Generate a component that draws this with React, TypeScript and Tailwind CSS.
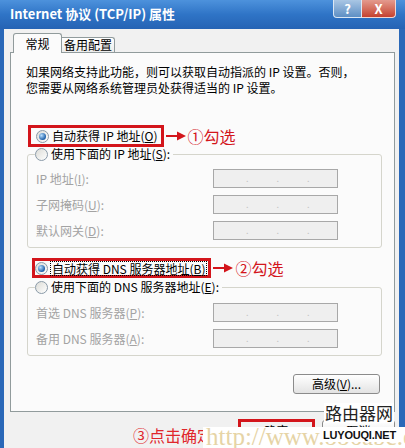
import type { ReactNode } from 'react';

type RadioProps = { checked?: boolean; disabled?: boolean };

function Radio({ checked, disabled }: RadioProps) {
  return (
    <span
      className={`inline-flex w-[13px] h-[13px] shrink-0 items-center justify-center rounded-full border ${
        disabled
          ? 'border-[#b4b4b4] bg-[#f4f4f4]'
          : 'border-[#8a9aa8] bg-gradient-to-br from-[#dcdcd7] to-white'
      }`}
    >
      {checked && (
        <span className="w-[7px] h-[7px] rounded-full bg-[radial-gradient(circle_at_35%_35%,#b9e0ff,#1d5fa8_70%)]" />
      )}
    </span>
  );
}

function Arrow() {
  return (
    <svg width="20" height="10" viewBox="0 0 20 10" className="shrink-0">
      <line x1="0" y1="5" x2="13" y2="5" stroke="#d3151b" strokeWidth="2" />
      <polygon points="11,0.5 20,5 11,9.5" fill="#d3151b" />
    </svg>
  );
}

function IpBox() {
  return (
    <div className="w-[125px] h-[19px] border border-[#a8a8a8] bg-[#efefef] flex items-center pl-[32px] gap-[28px] text-[9px] leading-none text-[#c4c4c4]">
      <span>.</span>
      <span>.</span>
      <span>.</span>
    </div>
  );
}

function Row({ label }: { label: ReactNode }) {
  return (
    <>
      <div className="flex items-center text-[#a3a3a3]">{label}</div>
      <IpBox />
    </>
  );
}

function Group({ legend, rows, top }: { legend: ReactNode; rows: ReactNode[]; top: string }) {
  return (
    <fieldset className="ml-[1px] border border-[#d5d5cc] rounded-[3px] pl-[8px] pb-[7px]">
      <legend className="flex items-center gap-[3px] h-[14px] leading-[14px] -ml-[1px] pr-[3px]">
        <Radio />
        <span>{legend}</span>
      </legend>
      <div className={`grid grid-cols-[177px_125px] gap-y-[7px] ${top}`}>
        {rows.map((r, i) => (
          <Row key={i} label={r} />
        ))}
      </div>
    </fieldset>
  );
}

export default function App() {
  return (
    <div className="relative w-[405px] h-[448px] overflow-hidden bg-white font-['Noto_Sans_CJK_SC',sans-serif] text-[12px] text-black">
      <div className="flex flex-col h-full bg-[#2a68b8]">
        {/* title bar */}
        <div className="h-[29px] shrink-0 flex justify-between bg-gradient-to-b from-[#4d92dc] via-[#2f74c6] to-[#2563b4]">
          <div className="pl-[10px] pt-[6px] text-[13px] leading-[16px] font-bold text-white">
            Internet 协议 (TCP/IP) 属性
          </div>
          <div className="flex mr-[9px] h-[18px]">
            <div className="w-[29px] h-full flex items-center justify-center rounded-bl-[4px] border border-t-0 border-[#dbe7f4] bg-gradient-to-b from-[#a9c6e4] to-[#5e8fc4] text-white font-bold text-[13px] leading-none">
              ?
            </div>
            <div className="w-[34px] h-full flex items-center justify-center rounded-br-[4px] border border-t-0 border-l-0 border-[#f2d6d2] bg-gradient-to-b from-[#e39a8e] to-[#c4402f] text-white font-bold text-[13px] leading-none">
              X
            </div>
          </div>
        </div>

        {/* body */}
        <div className="flex-1 flex flex-col ml-[4px] mr-[6px] mb-[4px] bg-[#f1f1f1] pt-[4px] pl-[6px] pr-[4px]">
          {/* tabs */}
          <div className="flex items-end h-[20px] pl-[3px] -mb-[1px] relative z-10">
            <div className="w-[49px] h-[20px] border border-b-0 border-[#919b9c] rounded-t-[3px] bg-[#fbfbfb] flex items-start justify-center pt-[3px] leading-[14px]">
              常规
            </div>
            <div className="w-[53px] h-[15px] mb-[1px] border border-l-0 border-b-0 border-[#919b9c] rounded-tr-[3px] bg-gradient-to-b from-white to-[#ececec] flex items-center justify-center leading-[14px]">
              备用配置
            </div>
          </div>

          {/* panel */}
          <div className="h-[360px] border border-[#919b9c] bg-[#fbfbfb] pt-[11px] pl-[15px] pr-[12px] flex flex-col">
            <p className="leading-[16px]">
              如果网络支持此功能，则可以获取自动指派的 IP 设置。否则，
              <br />
              您需要从网络系统管理员处获得适当的 IP 设置。
            </p>

            <div className="flex items-center mt-[29px] ml-[2px]">
              <div className="flex items-center h-[22px] border-[3px] border-[#d3151b] pl-[5px] pr-[3px] gap-[3px] leading-[14px]">
                <Radio checked />
                <span>
                  自动获得 IP 地址(<u>O</u>)
                </span>
              </div>
              <div className="flex items-center ml-[2px] gap-[2px] text-[16px] leading-[18px] text-[#d3151b]">
                <Arrow />
                <span>①勾选</span>
              </div>
            </div>

            <Group
              legend={
                <>
                  使用下面的 IP 地址(<u>S</u>):
                </>
              }
              top="mt-[8px]"
              rows={[
                <>
                  IP 地址(<u>I</u>):
                </>,
                <>
                  子网掩码(<u>U</u>):
                </>,
                <>
                  默认网关(<u>D</u>):
                </>,
              ]}
            />

            <div className="flex items-center mt-[10px] ml-[6px]">
              <div className="flex items-center h-[20px] border-[3px] border-[#d3151b] pr-[1px] gap-[2px] leading-[13px]">
                <Radio checked />
                <span className="border border-dotted border-black px-[1px]">
                  自动获得 DNS 服务器地址(<u>B</u>)
                </span>
              </div>
              <div className="flex items-center ml-[2px] gap-[2px] text-[16px] leading-[18px] text-[#d3151b]">
                <Arrow />
                <span>②勾选</span>
              </div>
            </div>

            <div className="mt-[2px]">
              <Group
                legend={
                  <>
                    使用下面的 DNS 服务器地址(<u>E</u>):
                  </>
                }
                top="mt-[9px]"
                rows={[
                  <>
                    首选 DNS 服务器(<u>P</u>):
                  </>,
                  <>
                    备用 DNS 服务器(<u>A</u>):
                  </>,
                ]}
              />
            </div>

            <div className="flex justify-end mt-[18px] pr-[2px]">
              <button className="w-[87px] h-[20px] rounded-[3px] border border-[#8b8b8b] bg-gradient-to-b from-white to-[#e3e3e3] leading-[14px]">
                高级(<u>V</u>)...
              </button>
            </div>
          </div>

          {/* bottom buttons */}
          <div className="flex justify-end items-start gap-[7px] mt-[7px]">
            <div className="w-[77px] h-[30px] border-[3px] border-[#d3151b] flex items-start justify-center pt-[2px]">
              <span className="leading-[14px]">确定</span>
            </div>
            <div className="w-[73px] h-[22px] mt-[1px] rounded-[3px] border border-[#8b8b8b] bg-gradient-to-b from-white to-[#e3e3e3] flex items-center justify-center leading-[14px]">
              取消
            </div>
          </div>
        </div>
      </div>

      {/* annotation and watermark overlays */}
      <div className="absolute left-[133px] top-[425px] text-[16px] leading-[20px] text-[#e0262b]">
        ③点击确定
      </div>
      <div className="absolute left-[203px] top-[427px] w-[202px] h-[21px] bg-white overflow-hidden">
        <div className="pl-[3px] -mt-[3px] font-['Liberation_Serif',serif] text-[25px] leading-[26px] text-[#e6d4a6] whitespace-nowrap">
          http://www.886abc.com
        </div>
      </div>
      <div className="absolute left-[324px] top-[403px] px-[1px] bg-white text-[17px] leading-[20px] text-[#222] font-['Noto_Sans_CJK_SC',sans-serif]">
        路由器网
      </div>
      <div className="absolute left-[322px] top-[428px] px-[1px] bg-white font-['Liberation_Sans',sans-serif] font-bold text-[11px] leading-[14px] tracking-[-0.2px] text-[#111]">
        LUYOUQI.NET
      </div>
    </div>
  );
}
